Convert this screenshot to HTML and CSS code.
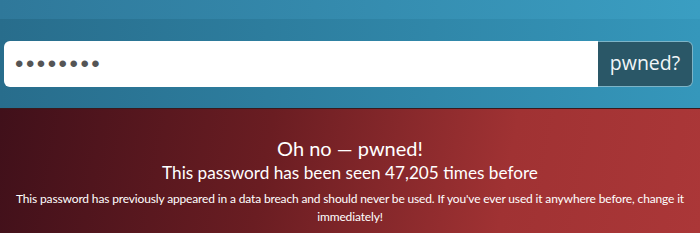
FILE: index.html
```html
<!DOCTYPE html>
<html lang="en">
<head>
    <meta charset="UTF-8">
    <meta name="viewport" content="width=device-width, initial-scale=1.0">
    <title>Pwned Passwords</title>
    <link rel="stylesheet" href="styles.css">
</head>
<body>

<div class="top-strip"></div>

<div class="search">
    <form class="search-form" onsubmit="return false;">
        <input type="password" class="search-input" value="password">
        <button class="search-btn">pwned?</button>
    </form>
</div>

<div class="result">
    <h2>Oh no &mdash; pwned!</h2>
    <h3>This password has been seen 47,205 times before</h3>
    <p>This password has previously appeared in a data breach and should never be used. If you've ever used it anywhere before, change it immediately!</p>
</div>

</body>
</html>
```

FILE: styles.css
```css
body {
    font-family: 'Lato', 'Open Sans', sans-serif;
    margin: 0;
    padding: 0;
    background-color: #2f7b9d;
    color: white;
    overflow: hidden;
}
.top-strip {
    height: 19px;
    background: linear-gradient(to right, #2f789a, #3a9ec2);
}
.search {
    background: linear-gradient(to right, #286d8c, #3597bb);
    padding: 22px 7px 21px 4px;
}
.search-form {
    display: flex;
    height: 46px;
}
.search-input {
    flex: 1;
    border: none;
    border-radius: 6px 0 0 6px;
    padding: 0 11px;
    font-size: 24px;
    color: #555;
    outline: none;
    letter-spacing: 2.5px;
}
.search-btn {
    width: 95px;
    background-color: #2a5767;
    border: 1px solid #7db4c7;
    border-left: none;
    border-radius: 0 6px 6px 0;
    color: #f2f6f8;
    font-family: 'Open Sans', sans-serif;
    font-size: 19.5px;
    cursor: pointer;
    padding: 0 0 3px 0;
}
.result {
    height: 125px;
    background: linear-gradient(100deg, #40101a 0%, #6a1d22 38%, #a03233 72%, #ab3738 100%);
    border-top: 1px solid #3a1a1c;
    text-align: center;
    padding: 26px 8px 0 8px;
    box-sizing: border-box;
}
.result h2 {
    font-weight: normal;
    font-size: 20px;
    margin: 0;
    line-height: 26px;
}
.result h3 {
    font-weight: normal;
    font-size: 17.2px;
    margin: 0 0 5px 0;
    line-height: 24px;
}
.result p {
    font-size: 12px;
    letter-spacing: -0.15px;
    margin: 0;
    line-height: 18px;
}
```
